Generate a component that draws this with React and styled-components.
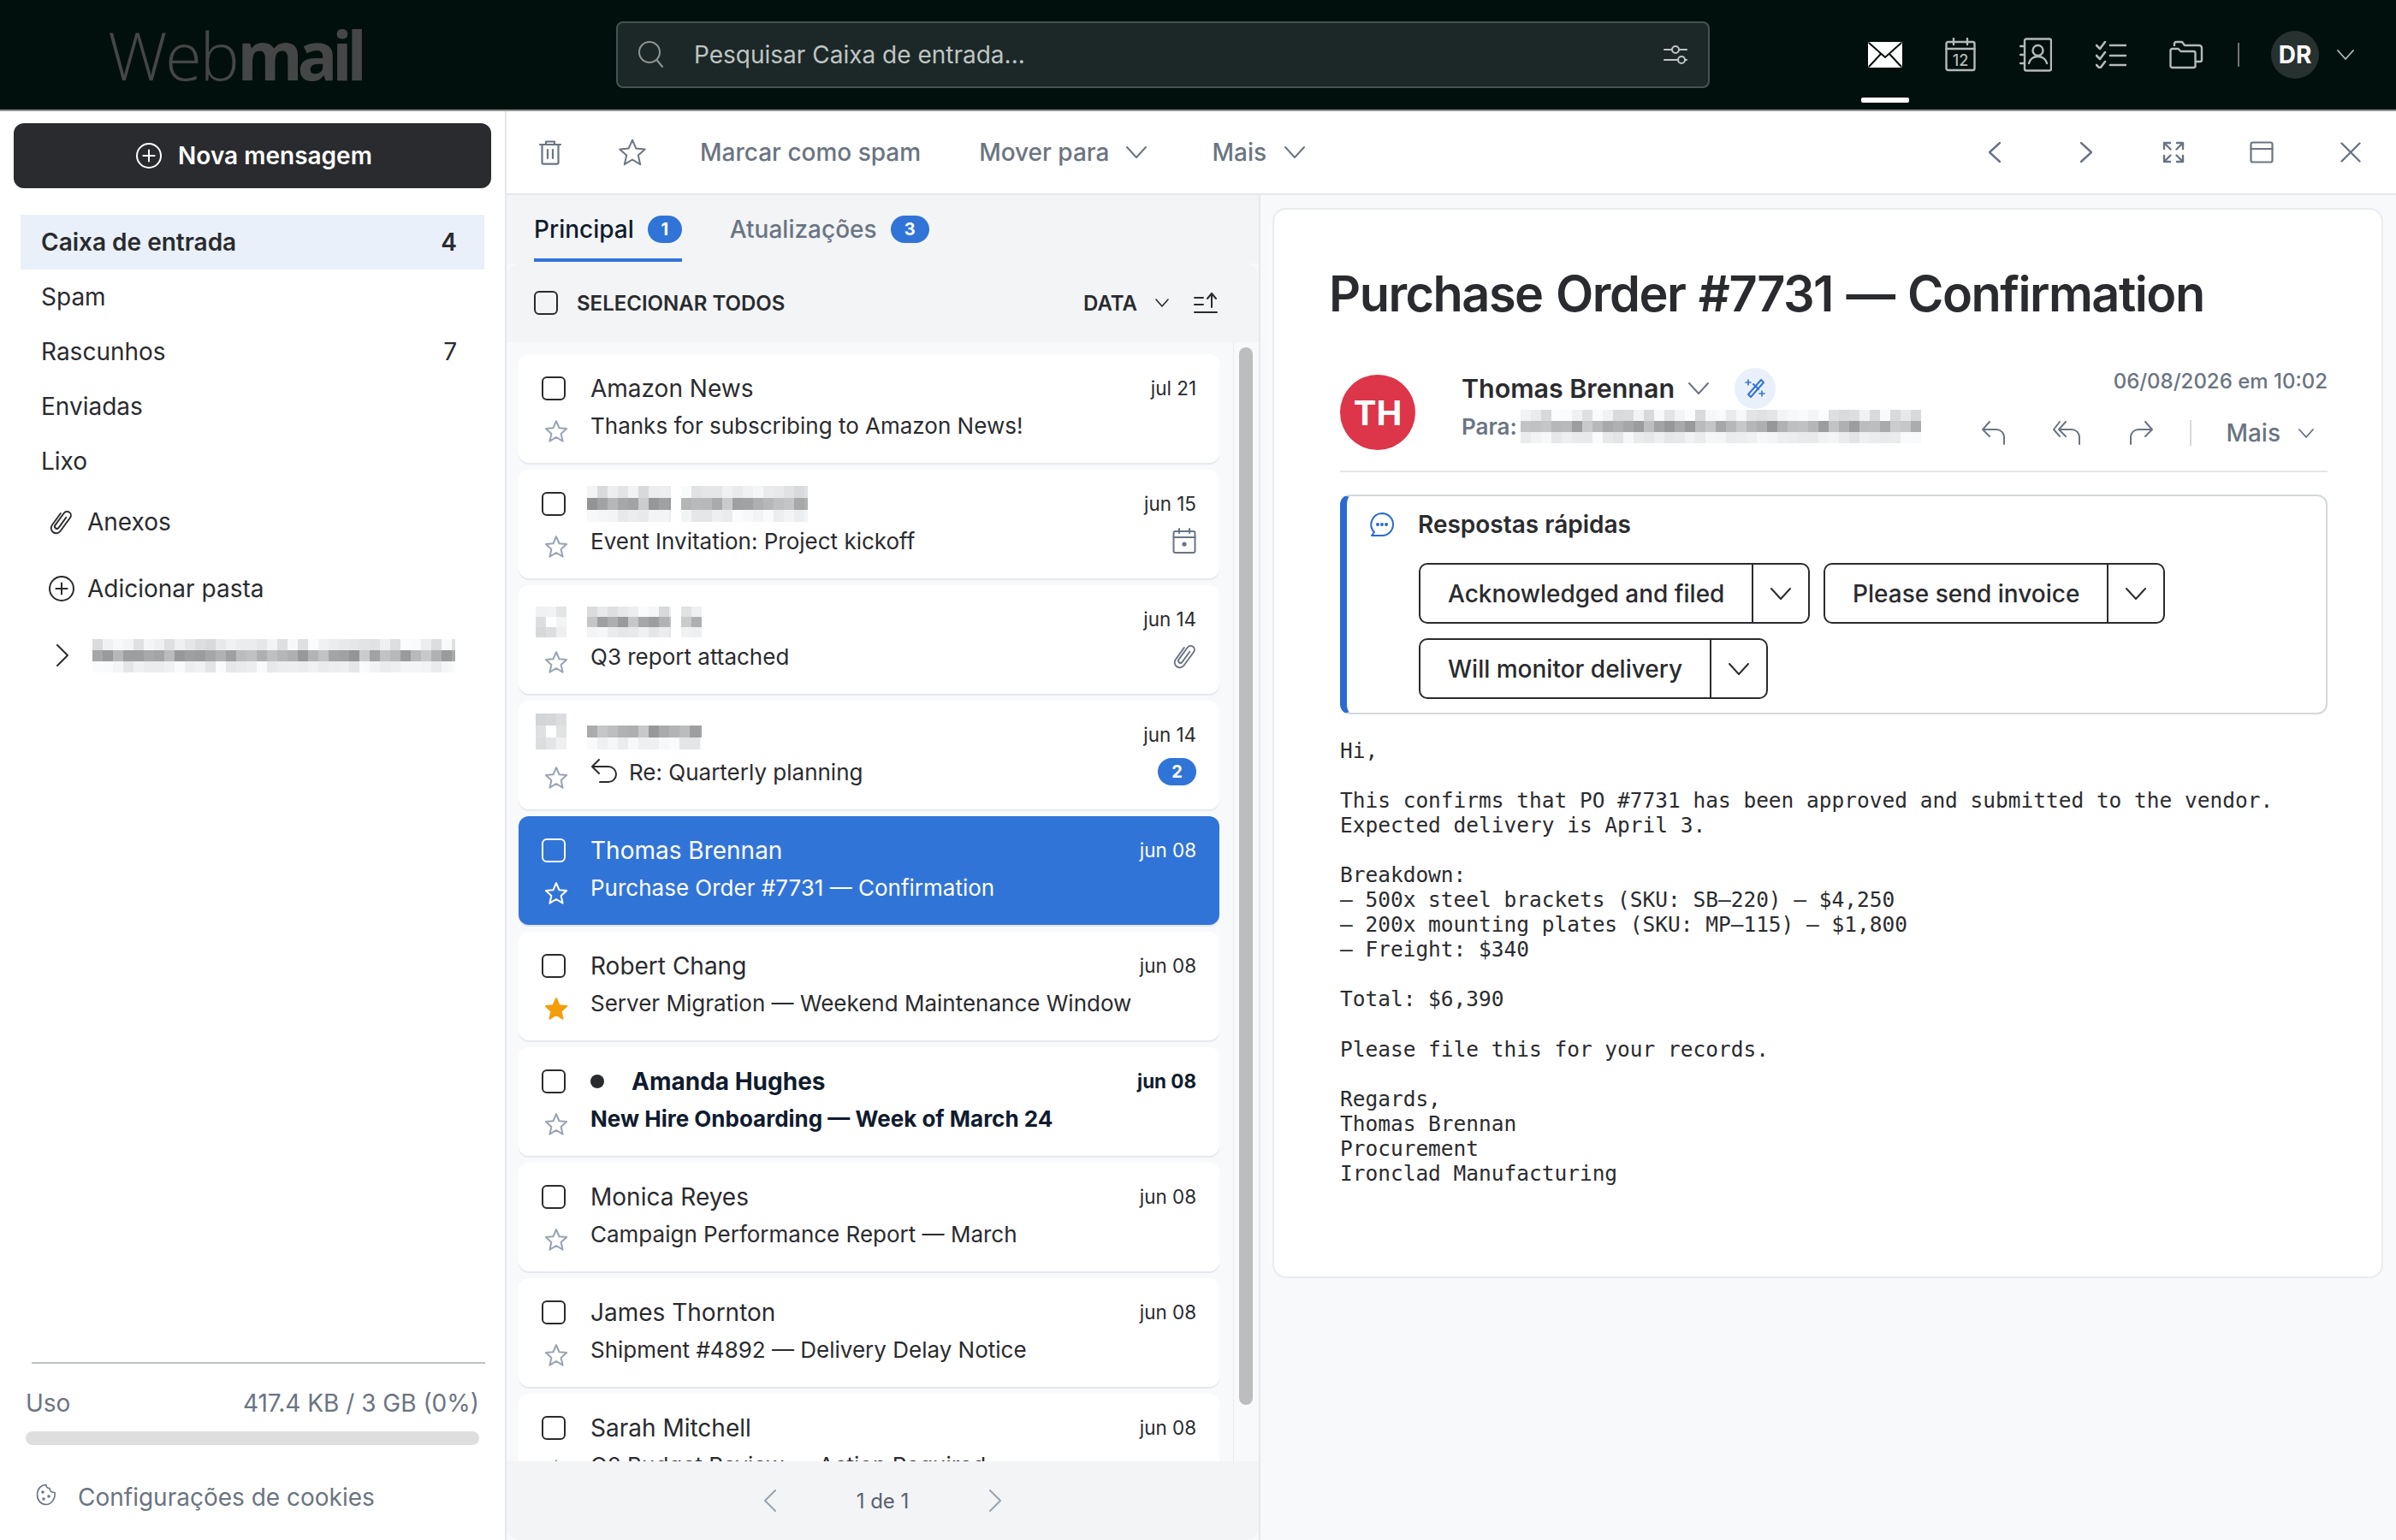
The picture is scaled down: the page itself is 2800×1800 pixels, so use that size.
import React from "react";
import styled, { createGlobalStyle } from "styled-components";

const Global = createGlobalStyle`
  html, body { margin: 0; padding: 0; background: #fff; }
  body { font-family: Inter, "Liberation Sans", sans-serif; color: #2a2b2e; }
  * { box-sizing: border-box; }
`;

const Page = styled.div`
  width: 2800px; height: 1800px; display: flex; flex-direction: column; overflow: hidden;
`;

/* ---------- icons ---------- */
const Svg = ({ w, h, vb, color = "currentColor", sw = 2, children, fill = "none" }) => (
  <svg width={w} height={h} viewBox={vb || `0 0 ${w} ${h}`} fill={fill} stroke={color} strokeWidth={sw}
    strokeLinecap="round" strokeLinejoin="round" style={{ display: "block", flexShrink: 0 }}>
    {children}
  </svg>
);
const ChevDown = ({ w = 24, h = 14, color, sw = 2 }) => (
  <Svg w={w} h={h} color={color} sw={sw}><path d={`M1 1 L${w / 2} ${h - 1} L${w - 1} 1`} /></Svg>
);
const ChevLeft = ({ w = 14, h = 24, color, sw = 2.4 }) => (
  <Svg w={w} h={h} color={color} sw={sw}><path d={`M${w - 1} 1 L1 ${h / 2} L${w - 1} ${h - 1}`} /></Svg>
);
const ChevRight = ({ w = 14, h = 24, color, sw = 2.4 }) => (
  <Svg w={w} h={h} color={color} sw={sw}><path d={`M1 1 L${w - 1} ${h / 2} L1 ${h - 1}`} /></Svg>
);
const StarIcon = ({ size = 28, color = "#98a2b3", filled, sw = 2 }) => (
  <Svg w={size} h={size} vb="0 0 24 24" color={color} sw={sw * 24 / size} fill={filled ? color : "none"}>
    <path d="M12 1.8l3 7 7.4.7-5.6 5 1.7 7.5L12 18l-6.5 4 1.7-7.5-5.6-5 7.4-.7z" />
  </Svg>
);
const Trash = () => (
  <Svg w={28} h={30} vb="0 0 28 30" color="#6b7482" sw={2.2}>
    <path d="M2 6h24M9 6V2.5h10V6M4.5 6v21a1.6 1.6 0 0 0 1.6 1.6h15.8a1.6 1.6 0 0 0 1.6-1.6V6M11 12v10M17 12v10" />
  </Svg>
);
const Clip = ({ color = "#2a2b2e" }) => (
  <Svg w={28} h={32} color={color} sw={1.9}>
    <g transform="rotate(36 14 16) translate(4 -1)">
      <path d="M4 9V26a6 6 0 0 0 12 0V6.500a4.500 4.500 0 0 0-9 0V24a2.500 2.500 0 0 0 5 0V9" />
    </g>
  </Svg>
);
const PlusCircle = ({ size = 30, color = "#2a2b2e", sw = 2 }) => (
  <Svg w={size} h={size} color={color} sw={sw}>
    <circle cx={size / 2} cy={size / 2} r={size / 2 - 1} />
    <path d={`M${size / 2} ${size * 0.28}V${size * 0.72}M${size * 0.28} ${size / 2}H${size * 0.72}`} />
  </Svg>
);
const CheckRow = ({ y }) => <path d={`M1 ${y}l4 4 6-8M17 ${y}h18`} />;

/* ---------- pixel smear standing in for redacted text ---------- */
const Smear = ({ width, seed = 1, cell = 12, rowH = 13, rows = 3, mid = 1, strength = 1, solid }) => {
  let s = seed * 9301 + 49297;
  const rnd = () => { s = (s * 9301 + 49297) % 233280; return s / 233280; };
  const cols = Math.ceil(width / cell);
  const cells = [];
  for (let r = 0; r < rows; r++) {
    for (let c = 0; c < cols; c++) {
      const v = rnd();
      let base = r === mid ? 205 - v * 60 * strength : (r < mid ? 252 - v * 36 : 252 - v * 24);
      if (solid) base = r === mid && c === 1 ? 254 : 244 - v * 34;
      const g = Math.round(base);
      cells.push(<rect key={`${r}-${c}`} x={c * cell} y={r * rowH} width={cell} height={rowH}
        fill={`rgb(${g - 2},${g},${g + 2})`} />);
    }
  }
  return (
    <svg width={width} height={rows * rowH} shapeRendering="crispEdges" style={{ display: "block", flexShrink: 0 }}>
      {cells}
    </svg>
  );
};

/* ---------- header ---------- */
const Header = styled.header`
  height: 130px; flex-shrink: 0; background: #010f0d; border-bottom: 2px solid #8f9592;
  display: flex; align-items: center;
`;
const Logo = styled.div`
  width: 720px; padding-left: 126px; font-size: 78px; line-height: 1; color: #444746;
  font-family: "Open Sans", Inter, sans-serif; letter-spacing: -2.5px; font-weight: 300;
  b { font-weight: 700; letter-spacing: -6.5px; }
`;
const Search = styled.div`
  width: 1278px; height: 78px; background: #1c2827; border: 2px solid #445350; border-radius: 8px;
  display: flex; align-items: center; padding: 0 24px 0 24px; color: #bfc5c3;
`;
const SearchText = styled.span`
  font-size: 28px; margin-left: 35px; flex: 1;
`;
const NavIcons = styled.nav`
  flex: 1; display: flex; align-items: center; position: relative; height: 100%; padding-left: 186px;
`;
const NavItem = styled.div`
  width: 88px; margin-left: -25px; margin-right: 25px; height: 100%; display: flex; align-items: center; justify-content: center; position: relative;
  color: #b3bab7;
`;
const NavMark = styled.span`
  position: absolute; left: 16px; width: 56px; top: 114px; height: 6px; background: #fff; border-radius: 2px;
`;
const NavSep = styled.span`
  width: 2px; height: 28px; background: #6d7573; margin-left: -9px;
`;
const Avatar = styled.div`
  width: 56px; height: 56px; border-radius: 50%; background: #273230; color: #fff; font-weight: 700; font-size: 28px;
  display: flex; align-items: center; justify-content: center; margin-left: 37px;
`;
const NavChev = styled.span`
  margin-left: 21px; color: #b3bab7; display: flex;
`;

/* ---------- body ---------- */
const Body = styled.div`
  flex: 1; display: flex; min-height: 0;
`;
const Sidebar = styled.aside`
  width: 592px; flex-shrink: 0; border-right: 2px solid #e6e8ed; display: flex; flex-direction: column; background: #fff;
`;
const Compose = styled.button`
  margin: 14px 16px 0; height: 76px; width: 558px; background: #2a2b2e; color: #fff; border: 0; border-radius: 12px;
  display: flex; align-items: center; justify-content: center; gap: 19px; font: 600 28px Inter, sans-serif; padding: 0 0 0 4px;
`;
const Folders = styled.div`
  margin: 31px 24px 0; display: flex; flex-direction: column;
`;
const Folder = styled.div`
  height: 64px; display: flex; align-items: center; justify-content: space-between; padding: 0 32px 0 24px;
  font-size: 28px; font-weight: ${p => (p.$active ? 600 : 400)}; background: ${p => (p.$active ? "#e9f0fa" : "transparent")};
`;
const SideAction = styled.div`
  height: 78px; display: flex; align-items: center; font-size: 28px; padding-left: ${p => p.$pad || 33}px; gap: ${p => p.$gap || 17}px;
`;
const SideFoot = styled.div`
  margin-top: auto; padding: 0 30px; display: flex; flex-direction: column;
`;
const SideRule = styled.div`
  height: 2px; background: #bcc2c0; margin: 0 -7px 0 7px;
`;
const UsageRow = styled.div`
  display: flex; justify-content: space-between; color: #6b7482; font-size: 28px; margin-top: 29px; line-height: 34px;
`;
const UsageBar = styled.div`
  height: 16px; margin-top: 16px; background: #dedede; border-radius: 8px;
`;
const Cookies = styled.div`
  display: flex; align-items: center; color: #6b7482; font-size: 28px; height: 50px; margin: 36px 0 25px 12px; gap: 25px;
`;
const CookieIcon = styled.span`
  display: block; padding-bottom: 6px;
`;

const Right = styled.main`
  flex: 1; display: flex; flex-direction: column; min-width: 0;
`;
const Toolbar = styled.div`
  height: 98px; flex-shrink: 0; border-bottom: 2px solid #e3e6ea; display: flex; align-items: center; color: #6b7482; font-size: 28px; font-weight: 500;
`;
const ToolBtn = styled.div`
  display: flex; align-items: center; gap: ${p => p.$gap || 0}px; margin-left: ${p => p.$ml || 0}px;
`;
const ToolRight = styled.div`
  margin-left: auto; display: flex; align-items: center; padding-right: 41px;
`;
const Split = styled.div`
  flex: 1; display: flex; min-height: 0;
`;

const ListPane = styled.section`
  width: 879px; flex-shrink: 0; background: #f8f9fb; display: flex; flex-direction: column; min-height: 0;
`;
const Tabs = styled.div`
  height: 80px; flex-shrink: 0; background: #f2f4f6; display: flex; padding-left: 32px; gap: 56px;
`;
const Tab = styled.div`
  height: 78px; display: flex; align-items: center; gap: 16px; font-size: 28px; padding-top: 6px;
  color: ${p => (p.$active ? "#101b2e" : "#6b7482")}; font-weight: 500;
  border-bottom: 4px solid ${p => (p.$active ? "#3174d8" : "transparent")};
`;
const Pill = styled.span`
  min-width: ${p => p.$w || 40}px; height: 32px; border-radius: 16px; background: #3174d8; color: #fff; font-size: 20px; font-weight: 700;
  display: inline-flex; align-items: center; justify-content: center;
`;
const SelectRow = styled.div`
  height: 92px; flex-shrink: 0; background: #f2f4f6; border-radius: 16px 16px 0 0; display: flex; align-items: center; padding: 0 48px 0 32px;
  font-size: 24px; font-weight: 600; color: #2a2b2e;
`;
const Box = styled.span`
  width: 28px; height: 28px; flex-shrink: 0; border: 2px solid ${p => p.$light ? "#fff" : "#2a2b2e"}; border-radius: 6px; display: block;
`;
const SelectLabel = styled.span`
  margin-left: 22px; flex: 1;
`;
const SortBtn = styled.span`
  display: flex; align-items: center; margin-left: ${p => p.$ml}px;
`;
const ListBody = styled.div`
  flex: 1; min-height: 0; display: flex;
`;
const Cards = styled.div`
  flex: 1; overflow: hidden; padding: 14px 16px 0 14px; display: flex; flex-direction: column; gap: 8px; min-width: 0;
`;
const Track = styled.div`
  width: 30px; flex-shrink: 0; border-left: 1px solid #e8eaee; padding: 6px 6px 0 6px;
`;
const Thumb = styled.div`
  width: 16px; height: 1236px; background: #bdbdbd; border-radius: 8px;
`;
const Card = styled.article`
  height: 127px; flex-shrink: 0; border-radius: 12px; background: ${p => (p.$sel ? "#3174d8" : "#fff")};
  box-shadow: 0 2px 0 ${p => (p.$sel ? "#dfe4ec" : "#e5e8ee")};
  color: ${p => (p.$sel ? "#fff" : "#2a2b2e")}; padding: 22px 27px 0 27px;
  display: grid; grid-template-columns: 57px minmax(0, 1fr) auto; grid-template-rows: 36px 36px; row-gap: 7px; align-items: center;
`;
const Sender = styled.div`
  font-size: 28px; font-weight: ${p => (p.$unread ? 700 : 400)}; color: ${p => (p.$unread ? "#101b2e" : "inherit")};
  display: flex; align-items: center; white-space: nowrap;
`;
const Dot = styled.span`
  width: 16px; height: 16px; background: #2a2b2e; border-radius: 50%; margin-right: 32px;
`;
const DateText = styled.div`
  font-size: 22.4px; text-align: right; padding-bottom: 2px; font-weight: ${p => (p.$unread ? 700 : 400)}; color: ${p => (p.$unread ? "#101b2e" : "inherit")};
`;
const StarCell = styled.div`
  margin-top: 14px; padding-left: 3px;
`;
const Subject = styled.div`
  font-size: 26px; white-space: nowrap; display: flex; align-items: center; gap: 11px; overflow: hidden;
  font-weight: ${p => (p.$unread ? 700 : 400)}; color: ${p => (p.$unread ? "#101b2e" : "inherit")};
`;
const Aside = styled.div`
  display: flex; justify-content: flex-end; color: #6b7482;
`;
const Redact = styled.div`
  margin-left: -4px; display: flex; align-items: center; gap: 0; padding-top: ${p => p.$top || 0}px;
`;
const RedactBox = styled.div`
  margin-left: -7px; display: flex; align-items: center; padding-top: ${p => p.$top || 0}px; padding-bottom: ${p => p.$bottom || 0}px;
`;
const RedactGap = styled.span`
  width: ${p => p.$w || 12}px; flex-shrink: 0;
`;
const Pager = styled.div`
  height: 92px; flex-shrink: 0; background: #f2f4f6; border-radius: 0 0 16px 16px; display: flex; align-items: center; justify-content: center;
  gap: 94px; color: #59616e; font-size: 24px;
`;

const ReadPane = styled.section`
  flex: 1; min-width: 0; background: #f8f9fb; border-left: 2px solid #e6e8ed; padding: 15px 15px 0 14px; display: flex; flex-direction: column;
`;
const Mail = styled.div`
  height: 1251px; background: #fff; border: 2px solid #e8ebef; border-radius: 16px; padding: 0 63px 0 77px;
`;
const Subject1 = styled.h1`
  margin: 65px 0 1px -13px; font-size: 57.6px; font-weight: 600; line-height: 66px; color: #2a2b2e; letter-spacing: -1.5px; word-spacing: 2.5px; white-space: nowrap;
`;
const MailHead = styled.div`
  margin-top: 62px; display: flex; border-bottom: 2px solid #e3e6ea; height: 114px;
`;
const RedAvatar = styled.div`
  width: 88px; height: 88px; border-radius: 50%; background: #dd3549; color: #fff; font-weight: 700; font-size: 40px;
  display: flex; align-items: center; justify-content: center;
`;
const HeadMain = styled.div`
  margin-left: 54px; flex: 1; display: flex; flex-direction: column;
`;
const NameRow = styled.div`
  display: flex; align-items: center; height: 48px; margin-top: -8px; font-size: 30.4px; font-weight: 600;
`;
const NameChev = styled.span`
  margin-left: 16px; color: #6b7482; display: flex;
`;
const AiBtn = styled.span`
  width: 48px; height: 48px; border-radius: 50%; background: #e9f0fa; margin-left: 30px; display: flex; align-items: center; justify-content: center;
`;
const ToRow = styled.div`
  display: flex; align-items: center; font-size: 26px; font-weight: 600; color: #6b7482; height: 40px; margin-top: 0;
`;
const ToSmear = styled.span`
  margin-left: 4px; display: block;
`;
const HeadSide = styled.div`
  display: flex; flex-direction: column; align-items: flex-end; color: #6b7482;
`;
const When = styled.div`
  font-size: 24px; font-weight: 500; height: 40px; line-height: 40px; margin-top: -12px;
`;
const Actions = styled.div`
  display: flex; align-items: center; margin-top: 20px; height: 40px; font-size: 28px; font-weight: 500; padding-right: 16px;
`;
const ActGap = styled.span`
  margin-left: ${p => p.$ml}px; display: block;
`;
const ActSep = styled.span`
  width: 2px; height: 30px; background: #d4d8dd; margin: 0 40px 0 42px;
`;

const Quick = styled.div`
  margin-top: 26px; height: 257px; border: 2px solid #d3d8dd; border-left: 8px solid #2a6ad0; border-radius: 12px; padding: 17px 0 0 26px;
`;
const QuickTitle = styled.div`
  display: flex; align-items: center; gap: 27px; font-size: 28px; font-weight: 600; height: 32px;
`;
const ReplyWrap = styled.div`
  margin: 29px 0 0 58px; display: flex; flex-wrap: wrap; gap: 17px 16px; width: 1000px;
`;
const Split2 = styled.div`
  height: 71px; border: 2px solid #2a2b2e; border-radius: 10px; display: flex; align-items: stretch; font-size: 28px; font-weight: 500;
`;
const SplitMain = styled.span`
  display: flex; align-items: center; padding: 0 32px; border-right: 2px solid #2a2b2e; width: ${p => p.$w}px; white-space: nowrap;
`;
const SplitCaret = styled.span`
  display: flex; align-items: center; justify-content: center; width: 64px;
`;
const Plain = styled.pre`
  margin: 28px 0 0; font: 400 24.48px/29.05px "DejaVu Sans Mono", monospace; color: #2a2b2e;
`;

/* ---------- data ---------- */
const mails = [
  { name: "Amazon News", date: "jul 21", subj: "Thanks for subscribing to Amazon News!" },
  { redact: 1, date: "jun 15", subj: "Event Invitation: Project kickoff", aside: "cal" },
  { redact: 2, date: "jun 14", subj: "Q3 report attached", aside: "clip" },
  { redact: 3, date: "jun 14", subj: "Re: Quarterly planning", reply: true, aside: "count" },
  { name: "Thomas Brennan", date: "jun 08", subj: "Purchase Order #7731 — Confirmation", sel: true },
  { name: "Robert Chang", date: "jun 08", subj: "Server Migration — Weekend Maintenance Window", starred: true },
  { name: "Amanda Hughes", date: "jun 08", subj: "New Hire Onboarding — Week of March 24", unread: true },
  { name: "Monica Reyes", date: "jun 08", subj: "Campaign Performance Report — March" },
  { name: "James Thornton", date: "jun 08", subj: "Shipment #4892 — Delivery Delay Notice" },
  { name: "Sarah Mitchell", date: "jun 08", subj: "Q2 Budget Review — Action Required" },
];

const bodyText = `Hi,

This confirms that PO #7731 has been approved and submitted to the vendor.
Expected delivery is April 3.

Breakdown:
– 500x steel brackets (SKU: SB–220) – $4,250
– 200x mounting plates (SKU: MP–115) – $1,800
– Freight: $340

Total: $6,390

Please file this for your records.

Regards,
Thomas Brennan
Procurement
Ironclad Manufacturing`;

const MailCard = ({ m }) => {
  let first = <Box $light={m.sel} />;
  if (m.redact === 2) first = <RedactBox $top={6}><Smear width={36} seed={22} rowH={12} solid /></RedactBox>;
  if (m.redact === 3) first = <RedactBox $bottom={8}><Smear width={36} seed={23} rowH={14} solid /></RedactBox>;
  return (
    <Card $sel={m.sel}>
      {first}
      {m.redact === 1 && <Redact><Smear width={98} seed={3} rowH={14} /><RedactGap /><Smear width={148} seed={4} rowH={14} /></Redact>}
      {m.redact === 2 && <Redact $top={6}><Smear width={98} seed={5} rowH={12} /><RedactGap /><Smear width={24} seed={6} rowH={12} /></Redact>}
      {m.redact === 3 && <Redact $top={6}><Smear width={134} seed={7} rows={2} mid={0} rowH={14} /></Redact>}
      {!m.redact && (
        <Sender $unread={m.unread}>{m.unread && <Dot />}{m.name}</Sender>
      )}
      <DateText $unread={m.unread}>{m.date}</DateText>
      <StarCell>
        <StarIcon size={28} color={m.starred ? "#f59e0b" : m.sel ? "#fff" : "#98a2b3"} filled={m.starred} />
      </StarCell>
      <Subject $unread={m.unread}>
        {m.reply && (
          <Svg w={34} h={32} color="#2a2b2e" sw={2}>
            <path d="M10 2L2 10l8 8M2 10h19a9 9 0 0 1 0 18H11" />
          </Svg>
        )}
        {m.subj}
      </Subject>
      <Aside>
        {m.aside === "cal" && (
          <Svg w={28} h={30} color="#6b7482" sw={2}>
            <rect x="1.5" y="4" width="25" height="25" rx="2" />
            <path d="M1.5 11h25M8 1v5M20 1v5" />
            <circle cx="14" cy="19" r="1.6" fill="#6b7482" />
          </Svg>
        )}
        {m.aside === "clip" && <Clip color="#6b7482" />}
        {m.aside === "count" && <Pill $w={45}>2</Pill>}
      </Aside>
    </Card>
  );
};

export default function App() {
  return (
    <Page>
      <Global />
      <Header>
        <Logo>Web<b>mail</b></Logo>
        <Search>
          <Svg w={30} h={32} color="#8d9693" sw={2}>
            <circle cx="13" cy="13" r="12" />
            <path d="M21.5 22l6.5 8" />
          </Svg>
          <SearchText>Pesquisar Caixa de entrada...</SearchText>
          <Svg w={28} h={26} color="#bfc5c3" sw={2}>
            <path d="M1 7h9M18 7h9M1 19h16M25 19h2" />
            <circle cx="14" cy="7" r="4" /><circle cx="21" cy="19" r="4" />
          </Svg>
        </Search>
        <NavIcons>
          <NavItem>
            <svg width="40" height="30" viewBox="0 0 40 30" style={{ display: "block" }}>
              <rect width="40" height="30" rx="2" fill="#fff" />
              <path d="M1 1l19 17L39 1M1 29l14-15M39 29L25 14" fill="none" stroke="#010f0d" strokeWidth="2" />
            </svg>
            <NavMark />
          </NavItem>
          <NavItem>
            <Svg w={36} h={40} sw={2.4}>
              <rect x="1.5" y="5" width="33" height="33" rx="2" />
              <path d="M1.5 13h33M10 1v7M26 1v7" />
              <text x="18" y="33" textAnchor="middle" fontFamily="Inter, sans-serif" fontSize="18" fontWeight="500" fill="#b3bab7" stroke="none">12</text>
            </Svg>
          </NavItem>
          <NavItem>
            <Svg w={38} h={40} sw={2.4}>
              <rect x="6" y="1.5" width="31" height="37" rx="2" />
              <path d="M1 10h5M1 20h5M1 30h5" />
              <circle cx="21.5" cy="15" r="6" />
              <path d="M11 30c1-5 5.500-8 10.500-8s9.500 3 10.500 8" />
            </Svg>
          </NavItem>
          <NavItem>
            <Svg w={36} h={32} sw={2.6}>
              <CheckRow y={5} /><CheckRow y={17} /><CheckRow y={28} />
            </Svg>
          </NavItem>
          <NavItem>
            <Svg w={40} h={34} sw={2.4}>
              <path d="M1.500 12a2 2 0 0 1 2-2h7l3 3h15a2 2 0 0 1 2 2v15a2 2 0 0 1-2 2H3.500a2 2 0 0 1-2-2z" />
              <path d="M6 6V4a2 2 0 0 1 2-2h7l3 4h17a3 3 0 0 1 3 3v14a2 2 0 0 1-2 2h-4" />
            </Svg>
          </NavItem>
          <NavSep />
          <Avatar>DR</Avatar>
          <NavChev><ChevDown w={20} h={12} sw={1.8} /></NavChev>
        </NavIcons>
      </Header>

      <Body>
        <Sidebar>
          <Compose><PlusCircle size={30} color="#fff" /> Nova mensagem</Compose>
          <Folders>
            <Folder $active><span>Caixa de entrada</span><span>4</span></Folder>
            <Folder><span>Spam</span></Folder>
            <Folder><span>Rascunhos</span><span>7</span></Folder>
            <Folder><span>Enviadas</span></Folder>
            <Folder><span>Lixo</span></Folder>
            <SideAction><Clip /><span>Anexos</span></SideAction>
            <SideAction $gap={15}><PlusCircle size={30} /><span>Adicionar pasta</span></SideAction>
            <SideAction $pad={42} $gap={28}><ChevRight w={14} h={26} color="#2a2b2e" sw={2} /><Smear width={424} seed={11} /></SideAction>
          </Folders>
          <SideFoot>
            <SideRule />
            <UsageRow><span>Uso</span><span>417.4 KB / 3 GB (0%)</span></UsageRow>
            <UsageBar />
            <Cookies>
              <CookieIcon>
                <Svg w={24} h={26} color="#6b7482" sw={1.6}>
                  <path d="M12 1.500c0 3 2 4 4 4 0 3 2 5 6 5 1 7-4 14-10 14S1.500 20 1.500 13 6 1.500 12 1.500z" />
                  <circle cx="8" cy="10" r="1" /><circle cx="9" cy="18" r="1" /><circle cx="15" cy="15" r="1" />
                </Svg>
              </CookieIcon>
              <span>Configurações de cookies</span>
            </Cookies>
          </SideFoot>
        </Sidebar>

        <Right>
          <Toolbar>
            <ToolBtn $ml={37}><Trash /></ToolBtn>
            <ToolBtn $ml={65}><StarIcon size={34} color="#6b7482" /></ToolBtn>
            <ToolBtn $ml={62}>Marcar como spam</ToolBtn>
            <ToolBtn $ml={68} $gap={20}>Mover para <ChevDown color="#6b7482" /></ToolBtn>
            <ToolBtn $ml={76} $gap={21}>Mais <ChevDown color="#6b7482" /></ToolBtn>
            <ToolRight>
              <ChevLeft color="#6b7482" />
              <ToolBtn $ml={93}><ChevRight color="#6b7482" /></ToolBtn>
              <ToolBtn $ml={82}>
                <Svg w={26} h={26} color="#6b7482" sw={2.4}>
                  <path d="M2 9V2h7M2 2l7.500 7.500M24 9V2h-7M24 2l-7.500 7.500M2 17v7h7M2 24l7.500-7.500M24 17v7h-7M24 24l-7.500-7.500" />
                </Svg>
              </ToolBtn>
              <ToolBtn $ml={76}>
                <Svg w={28} h={26} color="#6b7482" sw={2.2}>
                  <rect x="1.500" y="1.500" width="25" height="23" rx="2" /><path d="M1.500 9h25" />
                </Svg>
              </ToolBtn>
              <ToolBtn $ml={78}>
                <Svg w={24} h={24} color="#6b7482" sw={2.4}><path d="M1.500 1.500l21 21M22.500 1.500l-21 21" /></Svg>
              </ToolBtn>
            </ToolRight>
          </Toolbar>

          <Split>
            <ListPane>
              <Tabs>
                <Tab $active>Principal <Pill>1</Pill></Tab>
                <Tab>Atualizações <Pill $w={45}>3</Pill></Tab>
              </Tabs>
              <SelectRow>
                <Box />
                <SelectLabel>SELECIONAR TODOS</SelectLabel>
                <span>DATA</span>
                <SortBtn $ml={21}><ChevDown w={16} h={10} color="#2a2b2e" sw={1.6} /></SortBtn>
                <SortBtn $ml={29}>
                  <Svg w={28} h={26} color="#2a2b2e" sw={2}>
                    <path d="M1 7h10M1 15h10M1 24h26M21 18V2l-5 6M21 2l5 6" />
                  </Svg>
                </SortBtn>
              </SelectRow>
              <ListBody>
                <Cards>
                  {mails.map((m, i) => <MailCard key={i} m={m} />)}
                </Cards>
                <Track><Thumb /></Track>
              </ListBody>
              <Pager>
                <ChevLeft w={14} h={26} color="#9aa3af" sw={2} />
                <span>1 de 1</span>
                <ChevRight w={14} h={26} color="#9aa3af" sw={2} />
              </Pager>
            </ListPane>

            <ReadPane>
              <Mail>
                <Subject1>Purchase Order #7731 — Confirmation</Subject1>
                <MailHead>
                  <RedAvatar>TH</RedAvatar>
                  <HeadMain>
                    <NameRow>
                      Thomas Brennan
                      <NameChev><ChevDown w={24} h={14} /></NameChev>
                      <AiBtn>
                        <Svg w={26} h={26} color="#3174d8" sw={2}>
                          <path d="M20 3l3 3L8 23l-3-3zM11 8l6 6" />
                          <path d="M5 3v6M2 6h6M21 16v6M18 19h6" strokeWidth="1.600" />
                        </Svg>
                      </AiBtn>
                    </NameRow>
                    <ToRow>Para:<ToSmear><Smear width={468} seed={15} strength={0.9} /></ToSmear></ToRow>
                  </HeadMain>
                  <HeadSide>
                    <When>06/08/2026 em 10:02</When>
                    <Actions>
                      <Svg w={30} h={30} color="#6b7482" sw={2}>
                        <path d="M10 2L2 11l8 8M2 11h16a9 9 0 0 1 9 9v8" />
                      </Svg>
                      <ActGap $ml={54}>
                        <Svg w={34} h={30} color="#6b7482" sw={2}>
                          <path d="M8 2L1 11l7 8M15 2L7 11l8 8M7 11h15a9 9 0 0 1 9 9v8" />
                        </Svg>
                      </ActGap>
                      <ActGap $ml={54}>
                        <Svg w={30} h={30} color="#6b7482" sw={2}>
                          <path d="M20 2l8 9-8 8M28 11H12a9 9 0 0 0-9 9v8" />
                        </Svg>
                      </ActGap>
                      <ActSep />
                      <span>Mais</span>
                      <ActGap $ml={21}><ChevDown w={18} h={11} sw={1.8} /></ActGap>
                    </Actions>
                  </HeadSide>
                </MailHead>

                <Quick>
                  <QuickTitle>
                    <Svg w={30} h={30} color="#2a6ad0" sw={2}>
                      <path d="M15 2a13 13 0 0 1 0 26H3l3-4a13 13 0 0 1 9-22z" />
                      <circle cx="10" cy="15" r="1" fill="#2a6ad0" /><circle cx="15" cy="15" r="1" fill="#2a6ad0" /><circle cx="20" cy="15" r="1" fill="#2a6ad0" />
                    </Svg>
                    Respostas rápidas
                  </QuickTitle>
                  <ReplyWrap>
                    <Split2><SplitMain $w={389}>Acknowledged and filed</SplitMain><SplitCaret><ChevDown color="#2a2b2e" /></SplitCaret></Split2>
                    <Split2><SplitMain $w={331}>Please send invoice</SplitMain><SplitCaret><ChevDown color="#2a2b2e" /></SplitCaret></Split2>
                    <Split2><SplitMain $w={340}>Will monitor delivery</SplitMain><SplitCaret><ChevDown color="#2a2b2e" /></SplitCaret></Split2>
                  </ReplyWrap>
                </Quick>

                <Plain>{bodyText}</Plain>
              </Mail>
            </ReadPane>
          </Split>
        </Right>
      </Body>
    </Page>
  );
}
